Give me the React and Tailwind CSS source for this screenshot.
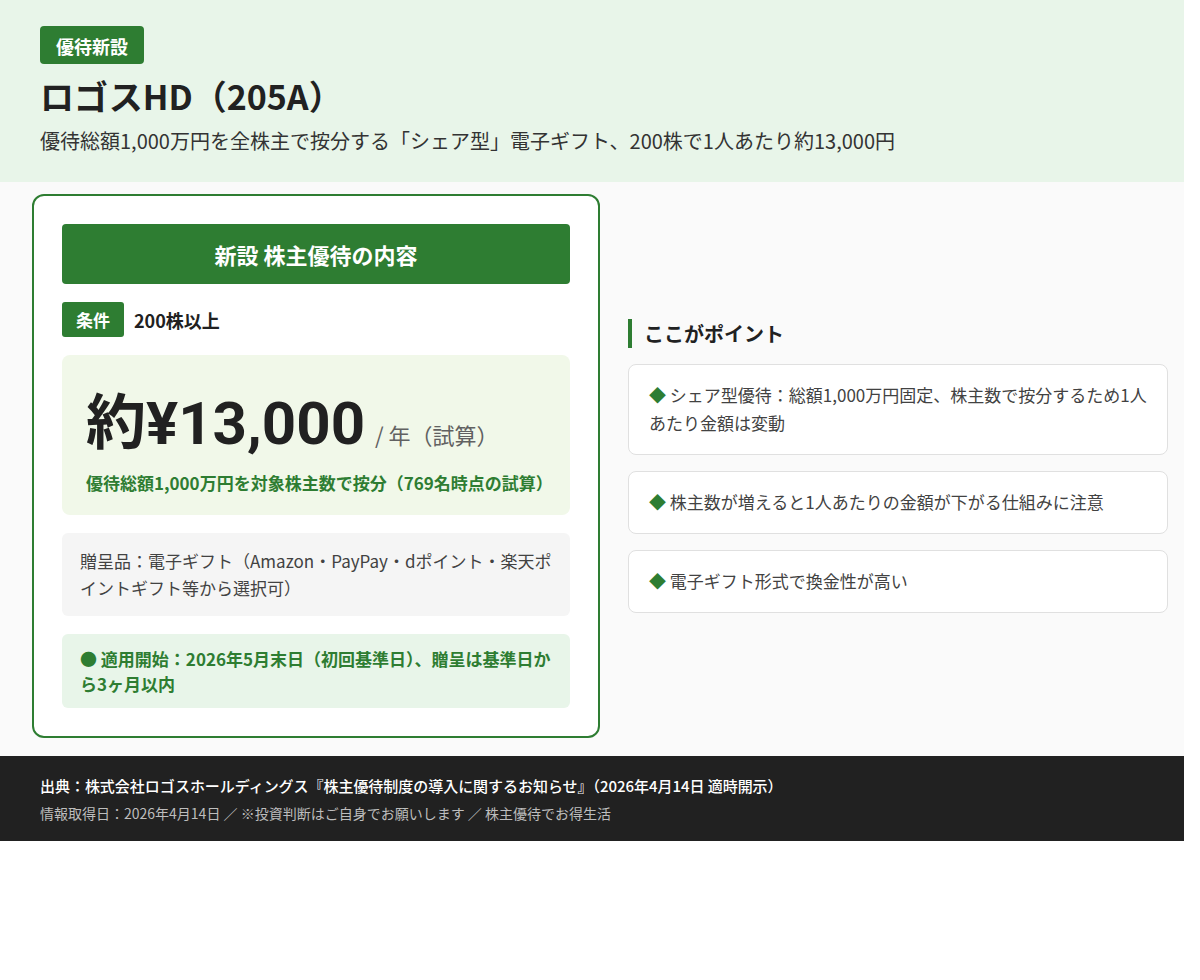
const POINTS = [
  "シェア型優待：総額1,000万円固定、株主数で按分するため1人あたり金額は変動",
  "株主数が増えると1人あたりの金額が下がる仕組みに注意",
  "電子ギフト形式で換金性が高い",
];

export default function App() {
  return (
    <div className="w-[1184px] font-['Noto_Sans_CJK_JP','Noto_Sans',sans-serif] text-[#212121]">
      {/* HEADER */}
      <header className="h-[182px] bg-[#e8f5e9] px-10 pt-[26px]">
        <span className="inline-block h-[38px] rounded bg-[#2e7d32] px-4 text-lg leading-[40px] font-bold text-white">
          優待新設
        </span>
        <h1 className="mt-2 text-[34px] leading-[47px] font-bold">ロゴスHD（205A）</h1>
        <p className="mt-2 text-xl leading-[28px] text-[#333333]">
          優待総額1,000万円を全株主で按分する「シェア型」電子ギフト、200株で1人あたり約13,000円
        </p>
      </header>

      {/* MAIN */}
      <main className="grid grid-cols-[568px_540px] items-center gap-7 bg-[#fafafa] pt-3 pr-4 pb-[18px] pl-8">
        <section className="rounded-xl border-2 border-[#2e7d32] bg-white p-7">
          <h2 className="flex h-[60px] items-center justify-center rounded bg-[#2e7d32] text-[22px] font-bold text-white">
            新設 株主優待の内容
          </h2>
          <div className="mt-[18px] flex items-center gap-[10px]">
            <span className="flex h-[35px] w-[62px] items-center justify-center rounded-[3px] bg-[#2e7d32] text-[17px] font-bold text-white">
              条件
            </span>
            <span className="text-lg font-bold">200株以上</span>
          </div>
          <div className="mt-[18px] h-[160px] rounded-lg bg-[#f1f8e9] px-6 pt-[34px]">
            <p className="flex items-baseline leading-[69px]">
              <span className="font-['Roboto','Noto_Sans_CJK_JP',sans-serif] text-[60px] font-bold">約¥13,000</span>
              <span className="ml-[10px] text-[22px] text-[#616161]">/ 年（試算）</span>
            </p>
            <p className="mt-[2px] text-[17px] leading-[24px] font-bold text-[#2e7d32]">
              優待総額1,000万円を対象株主数で按分（769名時点の試算）
            </p>
          </div>
          <div className="mt-[18px] rounded-md bg-[#f5f5f5] px-[18px] pt-[14px] pb-[15px] text-[17px] leading-[27px] text-[#424242]">
            贈呈品：電子ギフト（Amazon・PayPay・dポイント・楽天ポイントギフト等から選択可）
          </div>
          <div className="mt-[18px] rounded-md bg-[#e8f5e9] px-[18px] py-[12px] text-[17px] leading-[25px] font-bold text-[#2e7d32]">
            ● 適用開始：2026年5月末日（初回基準日）、贈呈は基準日から3ヶ月以内
          </div>
        </section>

        <section>
          <h3 className="border-l-4 border-[#2e7d32] pl-3 text-xl leading-[29px] font-bold">ここがポイント</h3>
          <ul className="mt-4 flex flex-col gap-4">
            {POINTS.map((p) => (
              <li
                key={p}
                className="rounded-lg border border-[#e0e0e0] bg-white px-5 pt-4 pb-[17px] text-[17px] leading-7 text-[#424242]"
              >
                <span className="text-[#2e7d32]">◆</span> {p}
              </li>
            ))}
          </ul>
        </section>
      </main>

      {/* FOOTER */}
      <footer className="h-[85px] bg-[#212121] px-10 pt-[18px]">
        <p className="text-[15px] leading-[24px] font-medium tracking-[-0.04px] text-white">
          出典：株式会社ロゴスホールディングス『株主優待制度の導入に関するお知らせ』（2026年4月14日 適時開示）
        </p>
        <p className="mt-[5px] text-sm leading-[20px] text-[#bdbdbd]">
          情報取得日：2026年4月14日 ／ ※投資判断はご自身でお願いします ／ 株主優待でお得生活
        </p>
      </footer>
    </div>
  );
}
